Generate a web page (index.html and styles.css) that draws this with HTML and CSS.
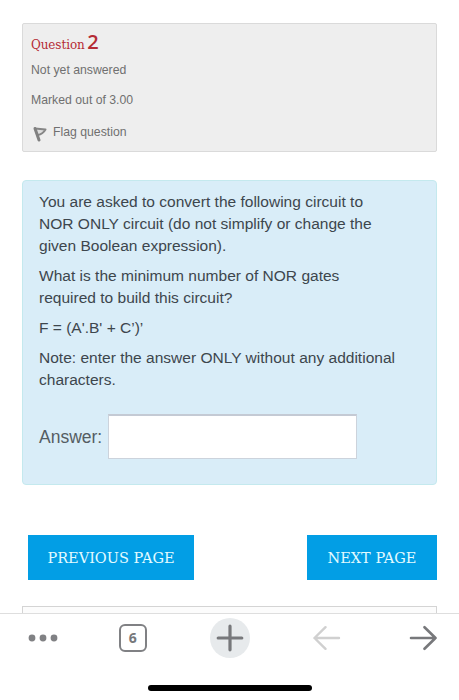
FILE: index.html
```html
<!DOCTYPE html>
<html lang="en">
<head>
  <meta charset="UTF-8" />
  <meta name="viewport" content="width=device-width, initial-scale=1.0" />
  <title>Question 2</title>
  <link rel="stylesheet" href="styles.css">
</head>
<body>
  <main class="page">
    <section class="info">
      <h3 class="info-title">Question <span class="number">2</span></h3>
      <p class="state">Not yet answered</p>
      <p class="grade">Marked out of 3.00</p>
      <div class="flag">
        <svg class="flag-icon" width="14" height="16" viewBox="0 0 14 16">
          <path d="M2 2.5 L12.5 3.5 C11 6 8.5 8.5 5 9" fill="#ddd" stroke="#858585" stroke-width="2" stroke-linejoin="round" />
          <path d="M2 2.5 L6 14" fill="none" stroke="#808080" stroke-width="3" stroke-linecap="round" />
        </svg>
        <span>Flag question</span>
      </div>
    </section>

    <section class="formulation">
      <p>You are asked to convert the following circuit to<br>NOR ONLY circuit (do not simplify or change the<br>given Boolean expression).</p>
      <p>What is the minimum number of NOR gates<br>required to build this circuit?</p>
      <p>F = (A'.B' + C’)’</p>
      <p>Note: enter the answer ONLY without any additional<br>characters.</p>
      <div class="answer">
        <label for="answer">Answer:</label>
        <input type="text" id="answer" />
      </div>
    </section>

    <div class="buttons">
      <button class="btn prev">PREVIOUS PAGE</button>
      <button class="btn next">NEXT PAGE</button>
    </div>

    <div class="next-block"></div>
  </main>

  <nav class="toolbar">
    <div class="tools">
      <svg width="30" height="8" viewBox="0 0 30 8" fill="#808184">
        <circle cx="4" cy="4" r="3.4" />
        <circle cx="15" cy="4" r="3.4" />
        <circle cx="26" cy="4" r="3.4" />
      </svg>
      <span class="tabs">6</span>
      <span class="plus">
        <svg width="28" height="28" viewBox="0 0 28 28" fill="none" stroke="#77787b" stroke-width="3.2" stroke-linecap="round">
          <path d="M14 2.2 V25.8 M2.2 14 H25.8" />
        </svg>
      </span>
      <svg class="back" width="28" height="26" viewBox="0 0 28 26" fill="none" stroke="#d0d0d0" stroke-width="2.4" stroke-linecap="round" stroke-linejoin="round">
        <path d="M26 13 H1.5 M12.5 2.2 L1.5 13 L12.5 23.8" />
      </svg>
      <svg width="28" height="26" viewBox="0 0 28 26" fill="none" stroke="#77787b" stroke-width="2.6" stroke-linecap="round" stroke-linejoin="round">
        <path d="M2 13 H26.5 M15.5 2.2 L26.5 13 L15.5 23.8" />
      </svg>
    </div>
    <div class="home-bar"></div>
  </nav>
</body>
</html>
```

FILE: styles.css
```css
* {
  box-sizing: border-box;
  padding: 0;
  margin: 0;
}

body {
  font-family: "Liberation Sans", Arial, sans-serif;
  background: #fff;
  color: #3d464d;
  height: 700px;
  display: flex;
  flex-direction: column;
  overflow: hidden;
}

.page {
  height: 613px;
  padding: 23px 22px 0;
  overflow: hidden;
}

.info {
  height: 129px;
  padding: 8px;
  background: #eee;
  border: 1px solid #dadada;
  border-radius: 2px;
  color: #707070;
  font-size: 12.25px;
}

.info-title {
  height: 23px;
  line-height: 19px;
  font-family: "DejaVu Serif", serif;
  font-size: 12px;
  font-weight: normal;
  letter-spacing: -0.1px;
  word-spacing: -1px;
  color: #b52b35;
}

.number {
  font-family: "Open Sans", sans-serif;
  font-size: 20px;
  font-weight: 600;
}

.state,
.grade {
  height: 30px;
  line-height: 30px;
}

.grade {
  height: 31px;
  line-height: 31px;
}

.flag {
  display: flex;
  align-items: center;
  gap: 6px;
  height: 32px;
  padding-left: 2px;
}

.flag-icon {
  margin-top: 4px;
}

.formulation {
  height: 305px;
  margin-top: 28px;
  padding: 10px 16px;
  background: #d9edf8;
  border: 1px solid #c4e9ee;
  border-radius: 4px;
  font-size: 15.54px;
  line-height: 22px;
  white-space: nowrap;
}

.formulation p {
  margin-bottom: 8px;
}

.answer {
  display: flex;
  align-items: center;
  gap: 6px;
  margin-top: 23px;
  color: #555d63;
  font-size: 17.5px;
}

.answer input {
  width: 249px;
  height: 45px;
  background: #fff;
  border: 1px solid #ccd3dc;
  border-top: 2px solid #c4cad4;
}

.buttons {
  display: flex;
  justify-content: space-between;
  margin-top: 50px;
  padding-left: 6px;
}

.btn {
  height: 45px;
  background: #029ee5;
  border: none;
  color: #e4fbff;
  font-family: "DejaVu Serif", serif;
  font-size: 14.5px;
  white-space: nowrap;
}

.prev {
  width: 166px;
}

.next {
  width: 130px;
}

.next-block {
  height: 40px;
  margin-top: 26px;
  background: #fcfcfc;
  border: 1px solid #d4d4d4;
}

.toolbar {
  display: flex;
  flex-direction: column;
  align-items: center;
  height: 87px;
  border-top: 1px solid #dedede;
  background: #fff;
}

.tools {
  display: flex;
  justify-content: space-between;
  align-items: center;
  width: 100%;
  height: 47px;
  padding: 0 22px 0 28px;
}

.tabs {
  width: 28px;
  height: 28px;
  margin: 0 3px 0 -3px;
  border: 2.5px solid #808184;
  border-radius: 6px;
  color: #77787b;
  font-family: "Open Sans", sans-serif;
  font-size: 14px;
  font-weight: bold;
  line-height: 23px;
  text-align: center;
}

.plus {
  display: flex;
  justify-content: center;
  align-items: center;
  width: 40px;
  height: 40px;
  margin: 0 4px 0 -4px;
  border-radius: 50%;
  background: #e7eaec;
}

.back {
  margin: 0 4px 0 -4px;
}

.home-bar {
  width: 164px;
  height: 6px;
  margin-top: 24px;
  border-radius: 3px;
  background: #000;
}
```
